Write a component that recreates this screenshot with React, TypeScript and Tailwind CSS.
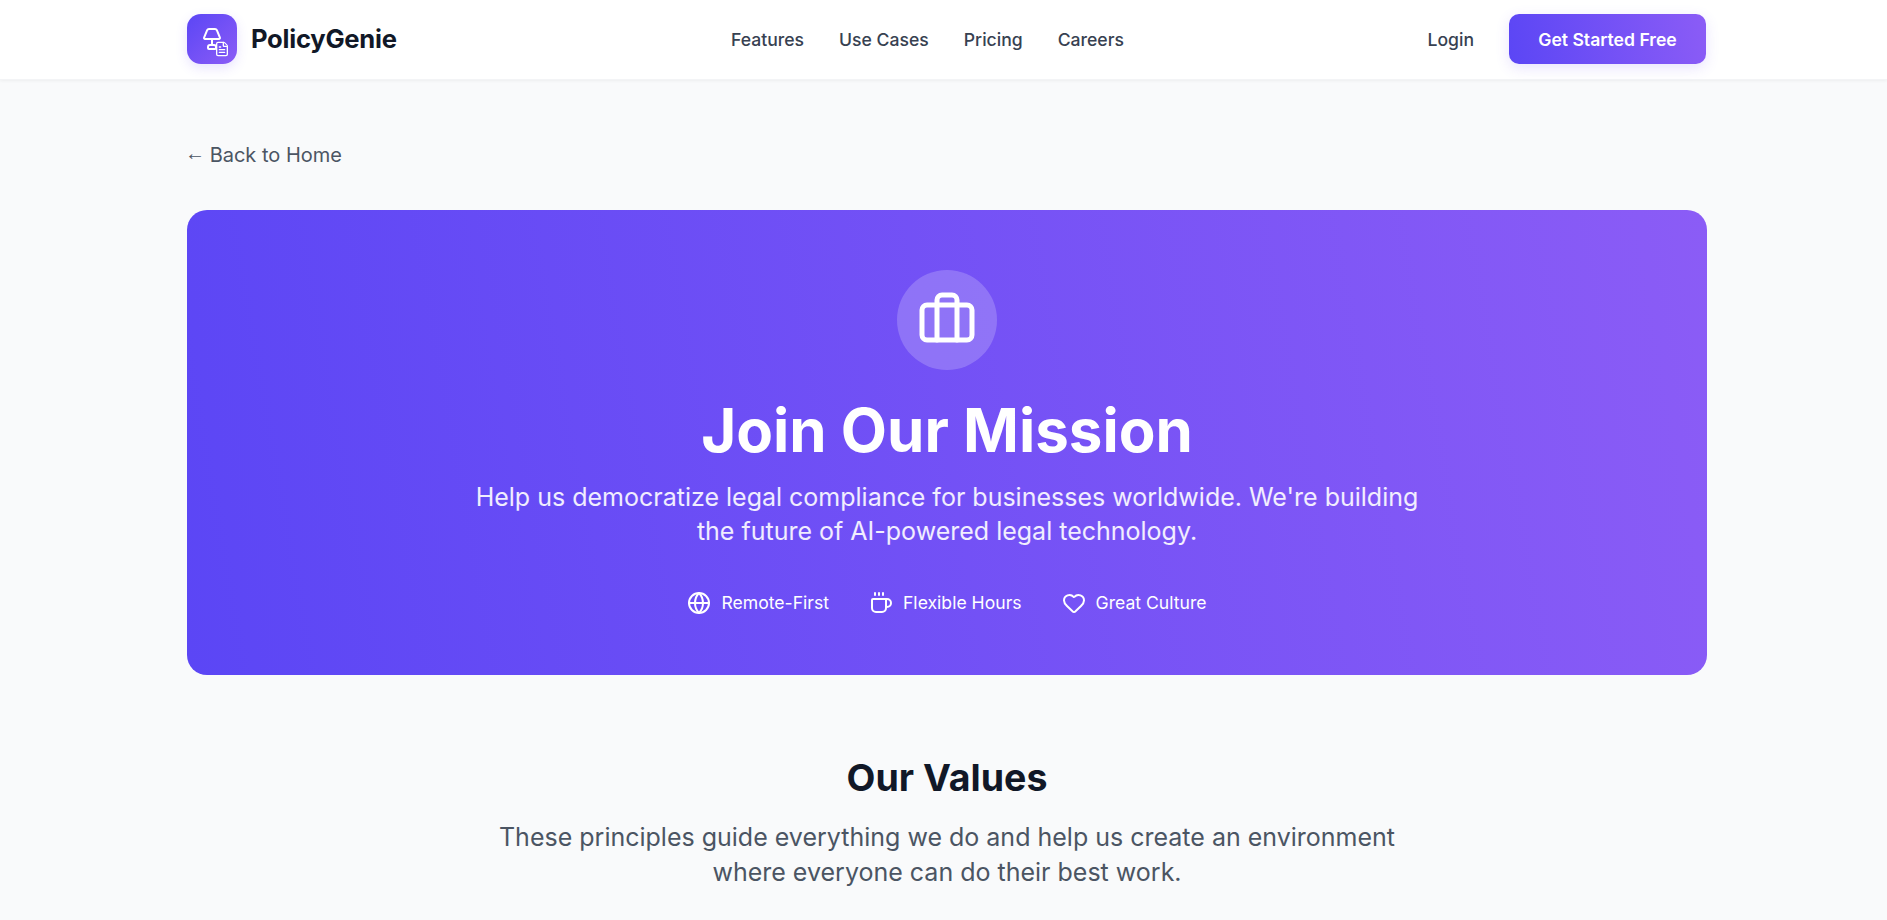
import React from 'react';
import { Briefcase, Coffee, FileText, Globe, Heart, Lamp } from 'lucide-react';

const NAV_LINKS = ['Features', 'Use Cases', 'Pricing', 'Careers'];

const PERKS = [
  { label: 'Remote-First', icon: Globe },
  { label: 'Flexible Hours', icon: Coffee },
  { label: 'Great Culture', icon: Heart },
];

const App: React.FC = () => {
  return (
    <div className="h-[920px] overflow-hidden bg-[#f9fafb] font-['Inter',sans-serif] text-[#111827]">
      {/* Header */}
      <header className="h-20 border-b border-[#f3f4f6] bg-white pl-[187px] shadow-[0_1px_3px_rgba(0,0,0,0.05)]">
        <div className="flex h-[78px] w-[1520px] items-center">
          <div className="flex w-[544px] items-center gap-[14px]">
            <div className="relative flex h-[50px] w-[50px] items-center justify-center rounded-[14px] bg-[linear-gradient(135deg,#5b46f5,#8b5cf6)] text-white shadow-[0_4px_12px_rgba(99,70,245,0.15)]">
              <Lamp size={24} strokeWidth={2} />
              <FileText size={16} strokeWidth={2} className="absolute right-[7px] bottom-[7px] fill-[#7450f6]" />
            </div>
            <span className="text-[25.6px] leading-none font-bold tracking-[-0.01em]">PolicyGenie</span>
          </div>
          <nav className="flex items-center gap-[35px] pt-[2px] text-[17.6px] font-medium text-[#374151]">
            {NAV_LINKS.map((link) => (
              <a key={link}>{link}</a>
            ))}
          </nav>
          <div className="mr-px ml-auto flex items-center gap-[35px]">
            <a className="pt-[2px] text-[17.6px] font-medium text-[#374151]">Login</a>
            <button className="flex h-[50px] w-[197px] items-center justify-center rounded-[10px] bg-[linear-gradient(80deg,#5b46f5,#8b5cf6)] pt-[2px] text-[17.6px] font-semibold text-white shadow-[0_4px_14px_rgba(99,70,245,0.15)]">
              Get Started Free
            </button>
          </div>
        </div>
      </header>

      <main className="ml-[187px] w-[1520px] pt-[60px]">
        <a className="block text-[20px] leading-[30px] text-[#4b5563]">
          <span className="mr-[-1px] ml-[-2px] inline-block -translate-y-[2px] font-['Liberation_Sans',sans-serif]">←</span> Back to Home
        </a>

        {/* Hero */}
        <section className="mt-[40px] flex h-[465px] flex-col items-center rounded-[20px] bg-[linear-gradient(80deg,#5b46f5,#8b5cf6)] pt-[60px] text-center text-white">
          <div className="flex h-[100px] w-[100px] items-center justify-center rounded-full bg-white/20">
            <Briefcase size={60} strokeWidth={2} />
          </div>
          <h1 className="mt-[24px] text-[60px] leading-[72px] font-bold">Join Our Mission</h1>
          <p className="mt-[14px] w-[960px] text-[25px] leading-[34px] text-white/90">
            Help us democratize legal compliance for businesses worldwide. We're building the future of AI-powered legal technology.
          </p>
          <div className="mt-[42px] flex items-center gap-[40px]">
            {PERKS.map(({ label, icon: Icon }) => (
              <div key={label} className="flex items-center gap-[10px] text-[17.6px]">
                <Icon size={24} strokeWidth={2} />
                <span>{label}</span>
              </div>
            ))}
          </div>
        </section>

        {/* Values */}
        <section className="mt-[79px] flex flex-col items-center text-center">
          <h2 className="text-[37.5px] leading-[48px] font-bold">Our Values</h2>
          <p className="mt-[18px] w-[960px] text-[25px] leading-[35px] text-[#4b5563]">
            These principles guide everything we do and help us create an environment where everyone can do their best work.
          </p>
        </section>
      </main>
    </div>
  );
};

export default App;
